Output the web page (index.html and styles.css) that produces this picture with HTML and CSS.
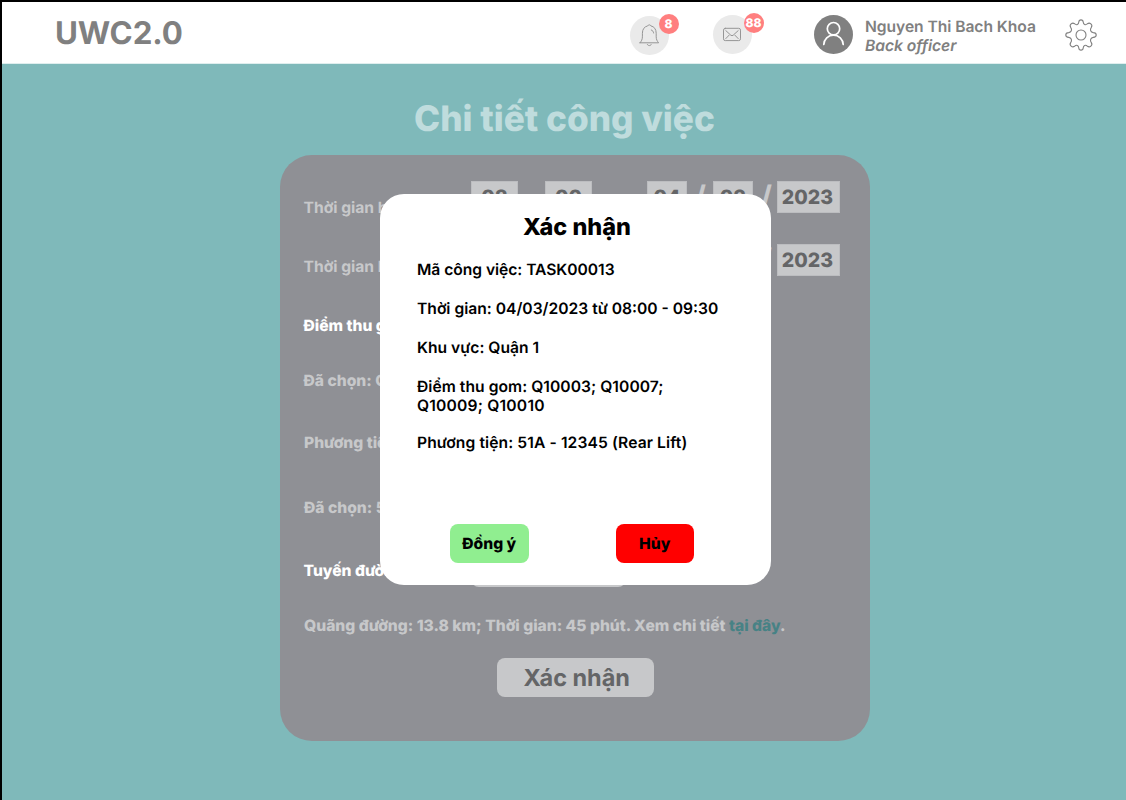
FILE: index.html
```html
<!DOCTYPE html>
<html lang="vi">
<head>
<meta charset="utf-8">
<title>UWC2.0</title>
<link rel="stylesheet" href="styles.css">
</head>
<body>
<div class="app">
  <header class="header">
    <div class="logo">UWC2.0</div>
    <div class="notice bell">
      <svg viewBox="0 0 39 39" width="39" height="39" fill="none" stroke="#959595" stroke-width="1" stroke-linecap="round" stroke-linejoin="round"><path d="M10 26.800h18.600c-1.400-1.700-2.400-3.300-2.400-6v-3.500c0-4.200-2-6.600-5.300-7.400-.4-1.400-2.800-1.400-3.200 0-3.300.8-5.300 3.200-5.300 7.400v3.500c0 2.700-1 4.300-2.400 6zM17.300 28.400c.5 1.700 3.500 1.700 4 0M21.300 14c1.500.6 2.200 1.500 2.300 3"/></svg>
      <span class="badge">8</span>
    </div>
    <div class="notice mail">
      <svg viewBox="0 0 39 39" width="39" height="39" fill="none" stroke="#959595" stroke-width="1" stroke-linecap="round" stroke-linejoin="round"><rect x="10.500" y="13.300" width="17" height="12.300" rx="1.800"/><path d="M12.800 15.600l5 4.600q1.200 1 2.400 0l5-4.600M12.800 23.600l3.300-3.400M25.200 23.600l-3.300-3.400"/></svg>
      <span class="badge">88</span>
    </div>
    <svg class="avatar" viewBox="0 0 39 39" width="39" height="39"><circle cx="19.500" cy="19.500" r="19.500" fill="#808080"/><g fill="none" stroke="#fff" stroke-width="1.700" stroke-linecap="round"><circle cx="19.500" cy="13.700" r="6.200"/><path d="M9.800 29.500c.2-5.400 4.400-9.400 9.700-9.400s9.500 4 9.700 9.400"/></g></svg>
    <div class="user"><div>Nguyen Thi Bach Khoa</div><div class="role">Back officer</div></div>
    <svg class="gear" viewBox="0 0 32 32" width="32" height="32" fill="none" stroke="#808080" stroke-width="1.100" stroke-linejoin="round"><circle cx="16" cy="16" r="5"/><path d="M13.800 3C14 .2 18 .2 18.200 3c.2 2.700 2.300 3.500 4.300 1.700 2.200-1.800 5.600 1.200 3.800 3.700-1.700 2.200-.6 4.900 2 5.200 3.900.3 3.900 4.500 0 4.800-2.600.3-3.700 3-2 5.200 1.800 2.500-1.600 5.500-3.800 3.700-2-1.800-4.100-1-4.300 1.700-.2 2.800-4.200 2.800-4.400 0-.2-2.700-2.300-3.500-4.300-1.700-2.200 1.800-5.600-1.200-3.800-3.700 1.700-2.200.6-4.900-2-5.200-3.900-.3-3.900-4.500 0-4.800 2.600-.3 3.700-3 2-5.200C3.900 5.900 7.300 2.900 9.500 4.700c2 1.800 4.100 1 4.300-1.700z"/></svg>
  </header>
  <main class="main">
    <h1 class="title">Chi tiết công việc</h1>
    <section class="card">
      <div class="row row-date">
        <span class="label">Thời gian bắt đầu:</span>
        <span class="field time">08</span><span class="field time second">00</span>
        <span class="field day">04</span><span class="slash">/</span><span class="field day">03</span><span class="slash last">/</span><span class="field year">2023</span>
      </div>
      <div class="row row-date end">
        <span class="label wide">Thời gian kết thúc:</span>
        <span class="slash last">/</span><span class="field year">2023</span>
      </div>
      <p class="points active">Điểm thu gom:</p>
      <p class="chosen">Đã chọn: Q10003</p>
      <p class="vehicle">Phương tiện:</p>
      <p class="chosen-vehicle">Đã chọn: 51A</p>
      <div class="row route active"><span class="label">Tuyến đường:</span><span class="select"></span></div>
      <p class="summary">Quãng đường: 13.8 km; Thời gian: 45 phút. Xem chi tiết <a class="link">tại đây</a>.</p>
      <button class="submit">Xác nhận</button>
    </section>
  </main>
  <div class="modal">
    <h2 class="modal-title">Xác nhận</h2>
    <div class="details">
      <p class="task">Mã công việc: TASK00013</p>
      <p>Thời gian: 04/03/2023 từ 08:00 - 09:30</p>
      <p>Khu vực: Quận 1</p>
      <p class="stops">Điểm thu gom: Q10003; Q10007;<br><span class="stops-more">Q10009; Q10010</span></p>
      <p class="truck">Phương tiện: 51A - 12345 (Rear Lift)</p>
    </div>
    <div class="actions"><button class="btn ok">Đồng ý</button><button class="btn cancel">Hủy</button></div>
  </div>
</div>
</body>
</html>
```
FILE: styles.css
```css
* { box-sizing: border-box; }
body { margin: 0; font-family: Inter, "Liberation Sans", sans-serif; font-optical-sizing: none; text-rendering: geometricPrecision; }
h1, h2, p { margin: 0; }
button { border: 0; padding: 0; font-family: inherit; text-rendering: inherit; }
.app { position: relative; width: 1126px; height: 800px; overflow: hidden; background: #7fb9ba; border-top: 2px solid #000; border-left: 2px solid #000; }
.header { display: flex; align-items: flex-start; height: 62px; background: #fff; border-bottom: 1px solid #dfeeee; color: #808080; }
.logo { width: 575px; margin: 12px 0 0 53px; font-size: 31.3px; line-height: 38px; font-weight: 700; letter-spacing: -0.04px; }
.notice { position: relative; width: 39px; height: 39px; border-radius: 50%; background: #eaeaea; }
.notice svg { display: block; }
.bell { margin-top: 14px; }
.mail { margin: 13px 0 0 44px; }
.badge { position: absolute; left: 28.5px; top: -2.5px; width: 20px; height: 20px; border-radius: 50%; background: #ff7f7f; color: #fff; font-size: 12px; line-height: 20px; font-weight: 800; text-align: center; }
.mail .badge { left: 30.5px; top: -2px; }
.avatar { margin: 13px 0 0 61.5px; }
.user { width: 199.5px; margin: 15px 0 0 12.5px; font-size: 15.64px; line-height: 19px; font-weight: 600; letter-spacing: -0.05px; white-space: nowrap; }
.role { font-style: italic; }
.gear { margin-top: 16.5px; }
.main { padding: 33px 0 0 278px; }
.title { width: 569px; height: 44px; font-size: 35.2px; line-height: 44px; font-weight: 800; color: #bfdcdd; text-align: center; }
.card { width: 590px; height: 586px; margin-top: 14px; padding: 26px 24px 0; border-radius: 32px; background: #8f9095; color: #c7c8ca; font-size: 15.64px; line-height: 19px; font-weight: 800; white-space: nowrap; }
.row { display: flex; }
.row-date { height: 32px; }
.label { width: 167px; text-indent: -0.5px; }
.wide { width: 449px; }
.row-date .label { margin-top: 17px; font-weight: 700; }
.end { margin-top: 31px; }
.row-date.end .label { margin-top: 12.5px; line-height: 19px; }
.field { height: 32px; background: #c7c8ca; border: 1px solid #bcbdc0; color: #646567; font-size: 19.55px; line-height: 31px; text-align: center; }
.time { width: 47px; }
.second { margin: 0 55px 0 27px; }
.day { width: 40px; }
.year { width: 63px; padding-right: 2px; }
.slash { width: 26px; font-size: 31px; line-height: 33px; font-weight: 700; text-align: center; }
.last { width: 24px; padding-left: 2px; }
.active { color: #fff; }
.points { margin-top: 40px; text-indent: -0.5px; }
.chosen { margin-top: 36px; text-indent: -0.5px; }
.vehicle { margin-top: 43px; }
.chosen-vehicle { margin-top: 46px; }
.route { margin-top: 34px; align-items: center; height: 39px; }
.select { width: 155px; height: 39px; margin-top: -6px; border-radius: 8px; background: #c7c8ca; }
.summary { margin-top: 26px; }
.link { color: #478285; }
.submit { display: block; width: 156.5px; height: 39px; margin: 23px 0 0 193px; padding-left: 3px; border-radius: 8px; background: #c7c8ca; color: #646567; font-size: 23.46px; line-height: 39px; font-weight: 700; }
.modal { position: absolute; left: 378px; top: 192px; width: 391px; height: 391px; padding: 18px 36px 0 37px; border-radius: 24px; background: #fff; color: #000; }
.modal-title { padding-left: 2px; font-size: 23.46px; line-height: 30px; font-weight: 800; text-align: center; }
.details { height: 249px; margin-top: 18px; font-size: 15.64px; line-height: 19px; font-weight: 600; white-space: nowrap; }
.details p { margin-bottom: 20px; }
.task { letter-spacing: -0.04px; }
.details .stops { margin-bottom: 18px; letter-spacing: 0.05px; }
.stops-more { letter-spacing: 0.2px; }
.truck { letter-spacing: 0.1px; }
.actions { display: flex; gap: 87px; margin: 15px 0 0 33px; }
.btn { width: 78.5px; height: 39px; border-radius: 8px; color: #000; font-size: 15.64px; font-weight: 800; line-height: 39px; }
.ok { background: #90ee90; }
.cancel { background: #f00; }
```
